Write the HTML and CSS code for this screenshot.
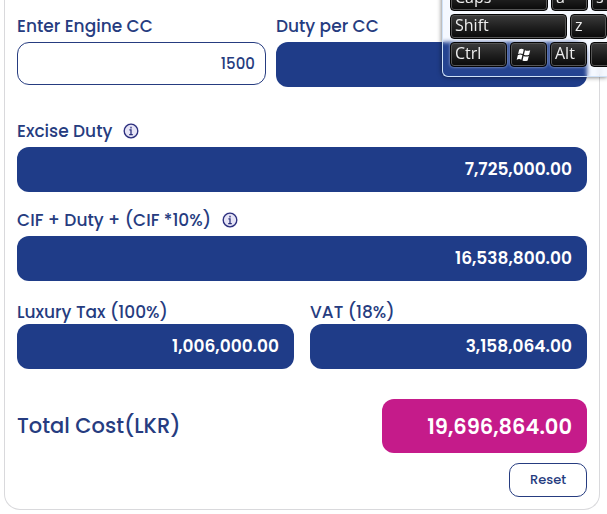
FILE: index.html
```html
<!DOCTYPE html>
<html lang="en">
<head>
    <meta charset="UTF-8">
    <title>Vehicle Tax Calculator</title>
    <link rel="stylesheet" href="styles.css">
</head>
<body>

<form class="calculator">
    <div class="row engine-row">
        <div class="field engine">
            <label for="engine">Enter Engine CC</label>
            <input type="text" id="engine" class="entry" value="1500">
        </div>
        <div class="field duty">
            <label for="duty">Duty per CC</label>
            <input type="text" id="duty" class="result" readonly>
        </div>
    </div>

    <div class="field excise">
        <div class="caption">
            <label for="excise">Excise Duty</label>
            <svg class="info" viewBox="0 0 16 16">
                <circle cx="8" cy="8" r="6.8"/>
                <path d="M8 3.8v1.6M6.4 6.9H8v4.8M6.2 11.7h3.6"/>
            </svg>
        </div>
        <input type="text" id="excise" class="result" value="7,725,000.00" readonly>
    </div>

    <div class="field cif">
        <div class="caption">
            <label for="cif">CIF + Duty + (CIF *10%)</label>
            <svg class="info" viewBox="0 0 16 16">
                <circle cx="8" cy="8" r="6.8"/>
                <path d="M8 3.8v1.6M6.4 6.9H8v4.8M6.2 11.7h3.6"/>
            </svg>
        </div>
        <input type="text" id="cif" class="result" value="16,538,800.00" readonly>
    </div>

    <div class="row tax-row">
        <div class="field">
            <label for="luxury">Luxury Tax (100%)</label>
            <input type="text" id="luxury" class="result" value="1,006,000.00" readonly>
        </div>
        <div class="field">
            <label for="vat">VAT (18%)</label>
            <input type="text" id="vat" class="result" value="3,158,064.00" readonly>
        </div>
    </div>

    <div class="total-row">
        <label for="total">Total Cost(LKR)</label>
        <input type="text" id="total" class="total" value="19,696,864.00" readonly>
    </div>
    <button type="reset" class="reset">Reset</button>
</form>

<div class="keyboard">
    <div class="keys">
        <button class="key caps">Caps</button>
        <button class="key">a</button>
        <button class="key">s</button>
    </div>
    <div class="keys">
        <button class="key shift">Shift</button>
        <button class="key">z</button>
    </div>
    <div class="keys">
        <button class="key ctrl">Ctrl</button>
        <button class="key win" aria-label="Windows">
            <svg class="flag" viewBox="0 0 16 14">
                <path d="M3.2 1.5Q5.6.2 7.8 1.6L6.7 6.1Q4.6 4.8 2.1 6Z"/>
                <path d="M9 2.2Q11.4 3.5 14.2 2.2L13.1 6.7Q10.4 8 7.9 6.7Z"/>
                <path d="M1.8 7.2Q4.3 6 6.4 7.3L5.3 11.8Q3.2 10.4.7 11.7Z"/>
                <path d="M7.6 7.9Q10.1 9.2 12.8 7.9L11.7 12.4Q9 13.7 6.5 12.4Z"/>
            </svg>
        </button>
        <button class="key">Alt</button>
        <button class="key" aria-label="Space"></button>
    </div>
</div>

</body>
</html>
```

FILE: styles.css
```css
* {
    box-sizing: border-box;
}
body {
    margin: 0 7px 0 4px;
    background-color: #fff;
    font-family: Poppins, Inter, "Liberation Sans", sans-serif;
    color: #263c80;
    overflow: hidden;
}
.calculator {
    padding: 14px 12px 12px;
    border: 1px solid #d9d9dc;
    border-top: none;
    border-radius: 0 0 16px 16px;
}
.row {
    display: flex;
}
.engine-row {
    gap: 10px;
    align-items: flex-start;
}
.tax-row {
    gap: 16px;
    margin-top: 19px;
}
.field {
    display: flex;
    flex-direction: column;
    flex: 1;
    min-width: 0;
}
.engine {
    flex: 4;
    gap: 4px;
}
.duty {
    flex: 5;
    gap: 4px;
}
.excise {
    gap: 4px;
    margin-top: 32px;
}
.cif {
    gap: 4px;
    margin-top: 16px;
}
label {
    font-size: 17px;
    font-weight: 500;
    line-height: 24px;
}
.caption {
    display: flex;
    align-items: center;
    gap: 11px;
}
.info {
    width: 16px;
    height: 16px;
    border-radius: 8px;
    background-color: #e6e4f6;
    fill: none;
    stroke: #2b2f7c;
    stroke-width: 1.3;
}
input {
    width: 100%;
    min-width: 0;
    font-family: inherit;
    text-align: right;
    border: none;
    border-radius: 12px;
}
.entry {
    height: 43px;
    padding: 0 10px;
    border: 1px solid #263c80;
    font-size: 15px;
    font-weight: 500;
    color: #263c80;
}
.result {
    height: 45px;
    padding: 0 15px 2px;
    background-color: #1f3c88;
    font-size: 17px;
    font-weight: 600;
    color: #fff;
}
.total-row {
    display: flex;
    justify-content: space-between;
    align-items: center;
    margin-top: 30px;
}
.total-row label {
    font-size: 21px;
}
.total {
    width: 36%;
    height: 54px;
    padding: 0 15px;
    background-color: #c51b8a;
    font-size: 21px;
    font-weight: 600;
    color: #fff;
}
.reset {
    display: block;
    width: 78px;
    height: 34px;
    margin: 10px 0 0 auto;
    border: 1px solid #263c80;
    border-radius: 10px;
    background-color: #fff;
    font-family: inherit;
    font-size: 13px;
    font-weight: 500;
    color: #263c80;
}

/* on-screen keyboard over the top right corner */
.keyboard {
    position: absolute;
    top: -22px;
    right: 0;
    display: flex;
    flex-direction: column;
    gap: 3px;
    width: 165px;
    padding: 7px 0 9px 7px;
    overflow: hidden;
    border: 1px solid #cfe2f8;
    border-right: none;
    border-radius: 0 0 0 6px;
    background-color: rgba(110, 165, 255, 0.08);
    backdrop-filter: blur(2px);
    box-shadow: 0 0 5px rgba(0, 0, 0, 0.6);
}
.keys {
    display: flex;
    gap: 3px;
}
.key {
    flex: none;
    width: 37px;
    height: 25px;
    padding: 0 4px 3px;
    border: 1px solid #050505;
    border-radius: 4px;
    background: linear-gradient(#3c3c3c, #202020 50%, #090909);
    box-shadow: inset 0 0 0 1px #555, 0 0 3px rgba(255, 255, 255, 0.6);
    font-family: "Segoe UI", "Open Sans", sans-serif;
    font-size: 16px;
    line-height: 20px;
    text-align: left;
    color: #eee;
}
.caps {
    width: 98px;
}
.shift {
    width: 117px;
}
.ctrl {
    width: 57px;
}
.win {
    display: flex;
    align-items: center;
    padding: 0 5px;
}
.flag {
    width: 16px;
    height: 14px;
    fill: #fff;
}
```
